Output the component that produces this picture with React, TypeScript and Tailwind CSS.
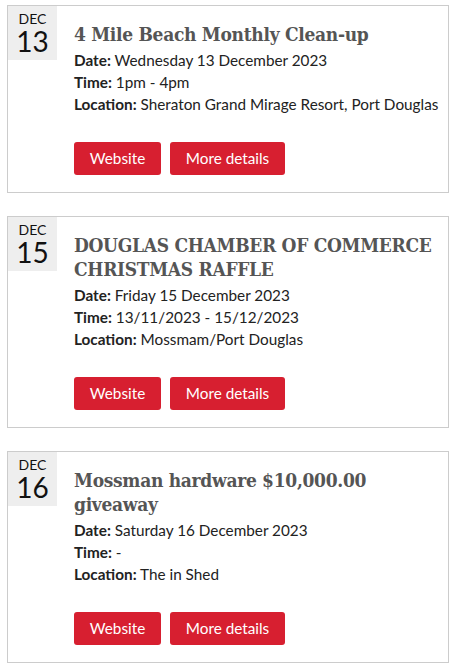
import React from "react";

type Ev = { mon: string; day: string; title: string; date: string; time: string; loc: string };

const events: Ev[] = [
  { mon: "DEC", day: "13", title: "4 Mile Beach Monthly Clean-up", date: "Wednesday 13 December 2023", time: "1pm - 4pm", loc: "Sheraton Grand Mirage Resort, Port Douglas" },
  { mon: "DEC", day: "15", title: "DOUGLAS CHAMBER OF COMMERCE CHRISTMAS RAFFLE", date: "Friday 15 December 2023", time: "13/11/2023 - 15/12/2023", loc: "Mossmam/Port Douglas" },
  { mon: "DEC", day: "16", title: "Mossman hardware $10,000.00 giveaway", date: "Saturday 16 December 2023", time: "-", loc: "The in Shed" },
];

function Card({ e }: { e: Ev }) {
  return (
    <div className="flex border border-[#cccccc] bg-white">
      <div className="w-[49px] h-[54px] shrink-0 bg-[#eeeeee] flex flex-col items-center pt-[5px] text-[#111]">
        <div className="text-[14px] leading-[16px]">{e.mon}</div>
        <div className="text-[28px] leading-[28px]">{e.day}</div>
      </div>
      <div className="flex-1 pl-[17px] pr-[4px] pt-[16px] pb-[17px]">
        <h2 className="text-[19px] leading-[24px] font-bold text-[#555555] tracking-[-0.3px] mb-[3px]" style={{ fontFamily: '"DejaVu Serif Condensed", "DejaVu Serif", serif', fontStretch: "condensed" }}>{e.title}</h2>
        <div className="text-[15.3px] leading-[22px] text-[#222]">
          <div><span className="font-bold">Date:</span> {e.date}</div>
          <div><span className="font-bold">Time:</span> {e.time}</div>
          <div><span className="font-bold">Location:</span> {e.loc}</div>
        </div>
        <div className="flex gap-[9px] mt-[27px]">
          <a className="h-[33px] w-[87px] bg-[#d71f30] rounded-[3px] text-white text-[15.3px] flex items-center justify-center">Website</a>
          <a className="h-[33px] w-[115px] bg-[#d71f30] rounded-[3px] text-white text-[15.3px] flex items-center justify-center">More details</a>
        </div>
      </div>
    </div>
  );
}

export default function App() {
  return (
    <div className="bg-white w-[453px] min-h-[665px] pl-[7px] pr-[4px] pt-[5px] flex flex-col gap-[23px]" style={{ fontFamily: 'Lato, "Liberation Sans", sans-serif' }}>
      {events.map((e) => (
        <Card key={e.day} e={e} />
      ))}
    </div>
  );
}
